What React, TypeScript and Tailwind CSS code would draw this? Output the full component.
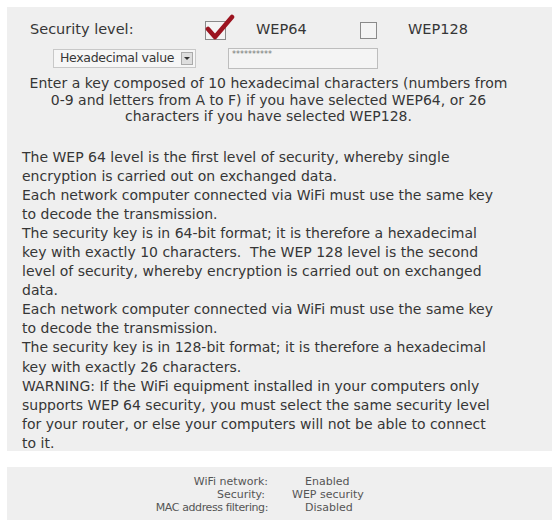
import React from "react";

const font = { fontFamily: '"DejaVu Sans", Verdana, sans-serif' };

function Check() {
  return (
    <div className="relative w-[21px] h-[19px] border border-[#8a8a8a] bg-[#f4f4f4]">
      <svg className="absolute left-[-1px] top-[-8px]" width="30" height="30" viewBox="0 0 30 30">
        <path d="M3 15 L10 23 L27 3" stroke="#9c1420" strokeWidth="4.5" fill="none" strokeLinecap="round" strokeLinejoin="round" />
      </svg>
    </div>
  );
}

export default function App() {
  const lines = [
    "The WEP 64 level is the first level of security, whereby single",
    "encryption is carried out on exchanged data.",
    "Each network computer connected via WiFi must use the same key",
    "to decode the transmission.",
    "The security key is in 64-bit format; it is therefore a hexadecimal",
    "key with exactly 10 characters.  The WEP 128 level is the second",
    "level of security, whereby encryption is carried out on exchanged",
    "data.",
    "Each network computer connected via WiFi must use the same key",
    "to decode the transmission.",
    "The security key is in 128-bit format; it is therefore a hexadecimal",
    "key with exactly 26 characters.",
    "WARNING: If the WiFi equipment installed in your computers only",
    "supports WEP 64 security, you must select the same security level",
    "for your router, or else your computers will not be able to connect",
    "to it.",
  ];
  return (
    <div className="w-[554px] h-[523px] bg-white pt-[7px] pl-[7px] pr-[2px] text-[#363636]" style={font}>
      <div className="bg-[#efefef] h-[444px] pt-[10px]">
        <div className="flex items-center h-[26px] text-[14.5px]">
          <span className="ml-[23px] w-[175px]">Security level:</span>
          <Check />
          <span className="ml-[30px] w-[104px]">WEP64</span>
          <div className="w-[17px] h-[17px] border border-[#8a8a8a] bg-[#f4f4f4]" />
          <span className="ml-[31px]">WEP128</span>
        </div>
        <div className="flex items-center mt-[4px] h-[22px] text-[12.5px]">
          <div className="ml-[46px] flex items-center h-[19px] border border-[#c8c8c8] bg-[#f6f6f6] w-[143px]">
            <span className="pl-[6px] flex-1 tracking-[-0.3px]">Hexadecimal value</span>
            <div className="w-[12px] h-[13px] mr-[2px] border border-[#aaa] bg-[#dedede] flex items-center justify-center">
              <div className="w-0 h-0 border-l-[3px] border-r-[3px] border-t-[3px] border-l-transparent border-r-transparent border-t-[#333]" />
            </div>
          </div>
          <div className="ml-[32px] h-[21px] w-[150px] border border-[#bdbdbd] bg-[#f4f4f4] text-[8px] leading-[10px] pl-[3px] pt-[1px] text-[#777]">
            **********
          </div>
        </div>
        <div className="text-center text-[14px] leading-[16.5px] mt-[6px] pr-[22px] whitespace-nowrap">
          Enter a key composed of 10 hexadecimal characters (numbers from
          <br />
          0-9 and letters from A to F) if you have selected WEP64, or 26
          <br />
          characters if you have selected WEP128.
        </div>
        <div className="mt-[23px] pl-[15px] text-[14px] leading-[19.1px] whitespace-pre">
          {lines.map((l, i) => (
            <div key={i}>{l}</div>
          ))}
        </div>
      </div>
      <div className="mt-[16px] bg-[#efefef] h-[53px] pt-[8px] text-[11px] leading-[13px] text-[#555]">
        <div className="grid grid-cols-[263px_1fr]">
          <span className="text-right pr-[2px]">WiFi network:</span>
          <span className="pl-[35px]">Enabled</span>
          <span className="text-right pr-[5px]">Security:</span>
          <span className="pl-[22px]">WEP security</span>
          <span className="text-right pr-[2px] tracking-[-0.4px]">MAC address filtering:</span>
          <span className="pl-[35px]">Disabled</span>
        </div>
      </div>
    </div>
  );
}
